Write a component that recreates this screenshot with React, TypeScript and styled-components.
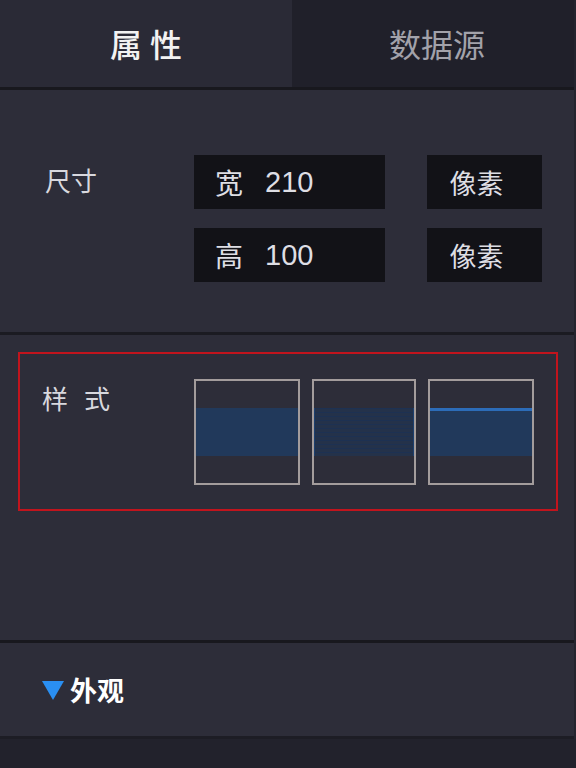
import React from "react";
import styled, { createGlobalStyle, css } from "styled-components";

const GlobalStyle = createGlobalStyle`
  html, body {
    margin: 0;
    padding: 0;
    background: #22222c;
  }
  body {
    font-family: "Noto Sans CJK SC", "Noto Sans", sans-serif;
  }
`;

const Panel = styled.div`
  width: 574px;
  border-right: 2px solid #24242e;
  background: #2d2d39;
`;

const TabBar = styled.div`
  display: grid;
  grid-template-columns: 292px 1fr;
  height: 87px;
  border-bottom: 3px solid #18181e;
`;

const Tab = styled.div<{ $active?: boolean }>`
  display: flex;
  align-items: center;
  justify-content: center;
  font-size: 32px;
  padding-bottom: 2px;
  ${({ $active }) =>
    $active
      ? css`
          background: #2a2a36;
          color: #f2f2f2;
          font-weight: 500;
          letter-spacing: 8px;
          padding-left: 8px;
        `
      : css`
          background: #20202a;
          color: #a2a2aa;
          padding-left: 8px;
        `}
`;

const Section = styled.div<{ $height: number; $divider?: boolean }>`
  height: ${(p) => p.$height}px;
  box-sizing: border-box;
  border-bottom: ${(p) => (p.$divider ? "3px solid #1b1b22" : "none")};
`;

const SizeGrid = styled.div`
  display: grid;
  grid-template-columns: 149px 191px 42px 115px;
  grid-auto-rows: 54px;
  row-gap: 19px;
  padding: 65px 0 0 45px;
`;

const Label = styled.div<{ $spaced?: boolean }>`
  color: #d8d8de;
  font-size: 26px;
  line-height: 1;
  padding-top: ${(p) => (p.$spaced ? 6 : 12)}px;
  letter-spacing: ${(p) => (p.$spaced ? "16px" : "0")};
`;

const Field = styled.div`
  background: #121217;
  color: #dedee4;
  font-size: 28px;
  display: flex;
  align-items: center;
  padding-left: 21px;
  gap: 22px;
`;

const Unit = styled.div`
  grid-column: 4;
  background: #121217;
  color: #dedee4;
  font-size: 27px;
  display: flex;
  align-items: center;
  justify-content: center;
  padding-right: 16px;
`;

const Num = styled.span`
  font-family: "Liberation Sans", "Noto Sans", sans-serif;
  font-size: 29px;
`;

const StyleSection = styled.div`
  padding: 17px 16px 0 18px;
`;

const Highlight = styled.div`
  height: 159px;
  box-sizing: border-box;
  border: 2px solid #c1141d;
  display: grid;
  grid-template-columns: 152px auto;
  padding: 25px 0 0 22px;
`;

const Swatches = styled.div`
  display: flex;
  gap: 12px;
`;

const Swatch = styled.div<{ $narrow?: boolean }>`
  width: ${(p) => (p.$narrow ? 104 : 106)}px;
  height: 106px;
  box-sizing: border-box;
  border: 2px solid #a39c9c;
  display: flex;
  align-items: center;
`;

const Band = styled.div<{ $kind: "solid" | "lined" | "topped" }>`
  width: 100%;
  height: 48px;
  background: #21395b;
  ${({ $kind }) =>
    $kind === "lined" &&
    css`
      background: repeating-linear-gradient(
        to bottom,
        #1d3152 0px,
        #1d3152 1px,
        #24324a 1px,
        #24324a 4px
      );
      box-shadow: inset 1px 0 0 #1c3f6e, inset -1px 0 0 #1c3f6e;
    `}
  ${({ $kind }) =>
    $kind === "topped" &&
    css`
      border-top: 3px solid #2c6cb8;
      box-sizing: border-box;
    `}
`;

const Collapse = styled.div`
  height: 93px;
  border-top: 3px solid #18181e;
  border-bottom: 3px solid #1d1d25;
  display: flex;
  align-items: center;
  padding-left: 42px;
  gap: 6px;
  color: #ffffff;
  font-size: 27px;
  font-weight: 700;
`;

const Arrow = styled.span`
  width: 0;
  height: 0;
  border-left: 11px solid transparent;
  border-right: 11px solid transparent;
  border-top: 19px solid #2a8ff2;
  margin-top: 2px;
`;

const Footer = styled.div`
  height: 32px;
  background: #22222c;
`;

export default function App() {
  return (
    <>
      <GlobalStyle />
      <Panel>
        <TabBar>
          <Tab $active>属性</Tab>
          <Tab>数据源</Tab>
        </TabBar>
        <Section $height={245} $divider>
          <SizeGrid>
            <Label>尺寸</Label>
            <Field>
              宽<Num>210</Num>
            </Field>
            <div />
            <Unit>像素</Unit>
            <div />
            <Field>
              高<Num>100</Num>
            </Field>
            <div />
            <Unit>像素</Unit>
          </SizeGrid>
        </Section>
        <Section $height={305}>
          <StyleSection>
            <Highlight>
              <Label $spaced>样式</Label>
              <Swatches>
                <Swatch>
                  <Band $kind="solid" />
                </Swatch>
                <Swatch $narrow>
                  <Band $kind="lined" />
                </Swatch>
                <Swatch>
                  <Band $kind="topped" />
                </Swatch>
              </Swatches>
            </Highlight>
          </StyleSection>
        </Section>
        <Collapse>
          <Arrow />
          外观
        </Collapse>
      </Panel>
      <Footer />
    </>
  );
}
